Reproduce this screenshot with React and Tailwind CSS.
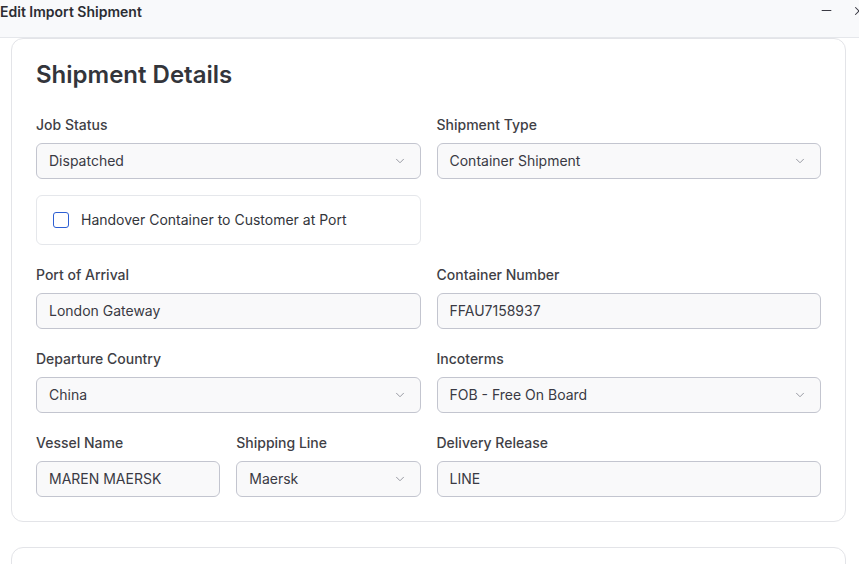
import { ChevronDown, Minus, X } from "lucide-react";

function Label({ children }) {
  return <div className="mb-2 text-sm font-medium leading-5 text-[#3f3f46]">{children}</div>;
}

function TextField({ label, value }) {
  return (
    <div>
      <Label>{label}</Label>
      <div className="flex h-9 items-center rounded-md border border-[#c3c5cf] bg-[#f9f9fa] px-3 text-sm text-[#3a3a44]">
        {value}
      </div>
    </div>
  );
}

function SelectField({ label, value }) {
  return (
    <div>
      <Label>{label}</Label>
      <div className="flex h-9 items-center justify-between rounded-md border border-[#c3c5cf] bg-[#f9f9fa] pl-3 pr-[13px] text-sm text-[#3a3a44]">
        <span>{value}</span>
        <ChevronDown size={14} strokeWidth={1.5} className="text-[#8a8d96]" />
      </div>
    </div>
  );
}

export default function App() {
  return (
    <div className="h-[564px] w-[859px] overflow-hidden bg-white font-['Inter',sans-serif]">
      <div className="flex h-[38px] items-start justify-between border-b border-[#e5e7eb] bg-[#f8f9fb]">
        <h1 className="mt-[2px] text-sm font-semibold leading-5 text-[#2b2d33]">Edit Import Shipment</h1>
        <div className="mt-[3px] flex items-center gap-[18px] text-[#3a3a44]">
          <Minus size={15} strokeWidth={1.8} />
          <X size={14} strokeWidth={1.8} className="-mr-[7px]" />
        </div>
      </div>

      <div className="pl-[11px] pr-[13px]">
        <div className="rounded-xl border border-[#e3e4e8] bg-white px-6 pb-6 pt-5">
          <h2 className="text-2xl font-semibold leading-8 text-[#33353b]">Shipment Details</h2>

          <div className="mt-6 grid grid-cols-2 gap-x-4 gap-y-5">
            <div>
              <SelectField label="Job Status" value="Dispatched" />
              <div className="mt-4 flex h-[50px] items-center gap-3 rounded-md border border-[#e5e7eb] px-4">
                <span className="h-4 w-4 rounded-[3px] border-[1.5px] border-[#2d5fd3] bg-white" />
                <span className="text-sm text-[#33353b]">Handover Container to Customer at Port</span>
              </div>
            </div>
            <SelectField label="Shipment Type" value="Container Shipment" />

            <TextField label="Port of Arrival" value="London Gateway" />
            <TextField label="Container Number" value="FFAU7158937" />

            <SelectField label="Departure Country" value="China" />
            <SelectField label="Incoterms" value="FOB - Free On Board" />

            <div className="grid grid-cols-2 gap-x-4">
              <TextField label="Vessel Name" value="MAREN MAERSK" />
              <SelectField label="Shipping Line" value="Maersk" />
            </div>
            <TextField label="Delivery Release" value="LINE" />
          </div>
        </div>

        <div className="mt-[25px] h-[60px] rounded-xl border border-[#e3e4e8] bg-white" />
      </div>
    </div>
  );
}
